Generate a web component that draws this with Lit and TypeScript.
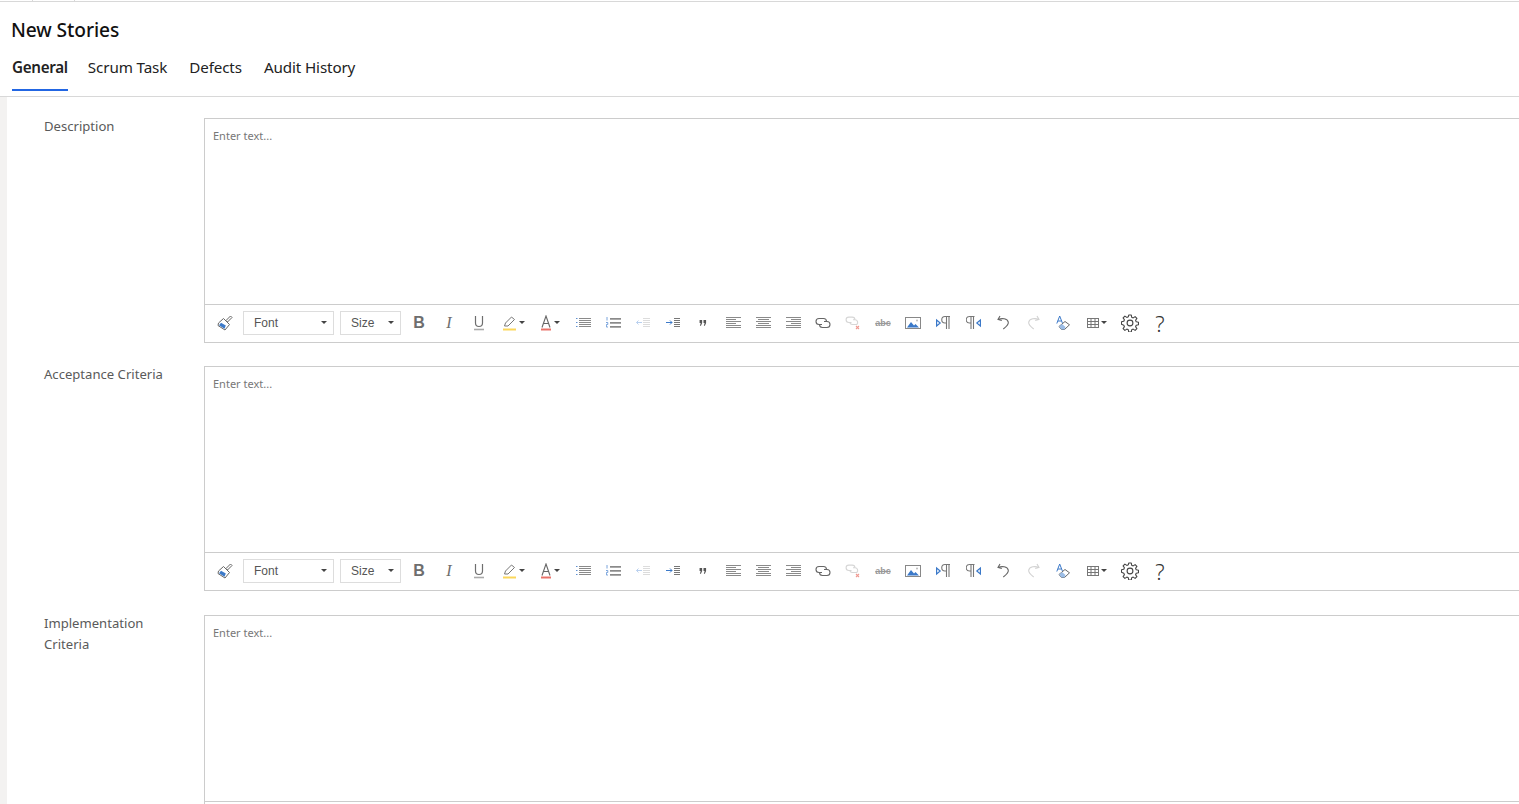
import { LitElement, html, css, svg } from "lit";
import { customElement } from "lit/decorators.js";

const G = "#6e6e6e";
const ico = (w: number, h: number, body: unknown) =>
  html`<svg width=${w} height=${h} viewBox="0 0 ${w} ${h}" fill="none">${body}</svg>`;
const lines = (rows: [number, number, number][], c = "#7a7a7a") =>
  rows.map(([x1, x2, y]) => svg`<path d="M${x1} ${y + 0.5}H${x2}" stroke=${c} stroke-width="1"/>`);
const caret = html`<span class="caret"></span>`;

const icons: Record<string, unknown> = {
  paint: ico(16, 16, svg`
    <path d="M9 5.500 13.500 1l1.500 1.500L10.500 7z" fill="#fff" stroke="#666"/>
    <path d="M6.500 3.500 12.500 9.500 8 15 1 10.500 1.500 8z" fill="#fff" stroke="#666"/>
    <path d="M2 10.300 4 7.800l4.800 2.600L7.500 13.800z" fill="#3b79c9"/>`),
  b: html`<span class="glyph bold">B</span>`,
  i: html`<span class="glyph ital">I</span>`,
  u: ico(14, 16, svg`
    <path d="M3.500 1V8a3.500 3.500 0 0 0 7 0V1" stroke="${G}" stroke-width="1.2"/>
    <path d="M2 14.500h10" stroke="#aaa" stroke-width="1.6"/>`),
  hl: ico(15, 16, svg`
    <path d="M2.500 11 3.500 8l6-6 3 2.500-6.500 6.500z" stroke="#777" fill="#fff"/>
    <path d="M1 14.500h13" stroke="#fbd75b" stroke-width="2"/>`),
  color: ico(12, 16, svg`
    <path d="M2 12.500 6 1l4 11.500M3.600 8.500h4.800" stroke="#666" stroke-width="1.100"/>
    <path d="M1 14.500h10" stroke="#e8736a" stroke-width="2"/>`),
  ul: ico(15, 12, svg`${lines([[3, 15, 1], [3, 15, 3], [3, 15, 5], [3, 15, 7], [3, 15, 9]], "#8a8a8a")}
    <path d="M0 1.500h1.500M0 5.500h1.500M0 9.500h1.500" stroke="#5f8fd0"/>`),
  ol: ico(15, 12, svg`${lines([[4, 15, 1], [4, 15, 5], [4, 15, 9]], "#8a8a8a")}${lines([[4, 15, 2], [4, 15, 6], [4, 15, 10]], "#aaa")}
    <path d="M1 0v3.500M0 5.500h1.800v2H.4v2.500h1.600" stroke="#6b9ad8" stroke-width=".9"/>`),
  out: ico(16, 12, svg`${lines([[8, 15, 1], [8, 15, 3], [8, 15, 5], [8, 15, 7], [8, 15, 9]], "#dcdcdc")}
    <path d="M7 5.500H1.500M3.500 3.500l-2 2 2 2" stroke="#b9d0ef"/>`),
  ind: ico(16, 12, svg`${lines([[9, 15, 1], [9, 15, 3], [9, 15, 5], [9, 15, 7], [9, 15, 9]], "#777")}
    <path d="M1 5.500h6M5 3.500l2 2-2 2" stroke="#3b79c9"/>`),
  quote: html`<svg width="8" height="6" viewBox="0 0 8 7" fill="none"><path d="M0 0h3v3.400L1.600 6.600H.4l.9-3H0zM4.600 0h3v3.400L6.200 6.600H5l.9-3H4.600z" fill="#555"/></svg>`,
  al: ico(16, 12, lines([[1, 16, 0], [1, 11, 2], [1, 16, 4], [1, 11, 6], [1, 16, 8], [1, 16, 10]], "#8a8a8a")),
  ac: ico(16, 12, lines([[1, 16, 0], [3, 14, 2], [1, 16, 4], [3, 14, 6], [1, 16, 8], [1, 16, 10]], "#8a8a8a")),
  ar: ico(16, 12, lines([[1, 16, 0], [6, 16, 2], [1, 16, 4], [6, 16, 6], [1, 16, 8], [1, 16, 10]], "#8a8a8a")),
  link: ico(16, 12, svg`
    <path d="M7 7.500H4a3 3 0 0 1 0-6h4.500a3 3 0 0 1 3 3" stroke="#666" stroke-width="1.100"/>
    <path d="M9 4.500h3a3 3 0 0 1 0 6H7.500a3 3 0 0 1-3-3" stroke="#666" stroke-width="1.100"/>`),
  unlink: ico(16, 14, svg`
    <path d="M6.500 6.500H3.800a2.700 2.700 0 0 1 0-5.400h3.400a2.700 2.700 0 0 1 2.700 2.700" stroke="#d6d6d6" stroke-width="1.100"/>
    <path d="M8 3.800h2a2.700 2.700 0 0 1 1.800 4.700H7.500A2.700 2.700 0 0 1 4.800 6" stroke="#d6d6d6" stroke-width="1.100"/>
    <path d="M11 10l3 3M14 10l-3 3" stroke="#ef9a92" stroke-width="1.100"/>`),
  strike: html`<span class="strike">abc</span>`,
  image: ico(16, 12, svg`
    <rect x=".5" y=".5" width="15" height="11" fill="#fff" stroke="#888"/>
    <path d="M2 10.500 6 5l3 3.400 1.500-1.400 3.500 3.500z" fill="#3b79c9"/>
    <circle cx="12" cy="3.600" r="1" fill="#bbb"/>`),
  ltr: ico(15, 15, svg`
    <path d="M.6 5v6l3.600-3z" fill="#fff" stroke="#3b79c9" stroke-width="1.200"/>
    <path d="M14 1.500H9a3 3 0 0 0 0 6.500h1.500M10.500 14V1.500M13 14V1.500" stroke="#777" stroke-width="1.100"/>`),
  rtl: ico(15, 15, svg`
    <path d="M14.400 5v6l-3.600-3z" fill="#fff" stroke="#3b79c9" stroke-width="1.200"/>
    <path d="M8.500 1.500H3.500a3 3 0 0 0 0 6.500H5M5 14V1.500M7.500 14V1.500" stroke="#777" stroke-width="1.100"/>`),
  undo: ico(13, 15, svg`
    <path d="M3 1 1 4.500l3.800 1M1.500 4.400c3-1.400 9-1.200 9.800 2.800.4 2.600-2 4.600-5 6.800" stroke="#666" stroke-width="1.100"/>`),
  redo: ico(13, 15, svg`
    <path d="M10 1l2 3.500-3.800 1M11.500 4.400C8.500 3 2.500 3.200 1.700 7.200c-.4 2.600 2 4.600 5 6.800" stroke="#d2d2d2" stroke-width="1.100"/>`),
  style: ico(15, 15, svg`
    <path d="M.8 8.500 3.700 1l2.900 7.500M1.800 6h3.800" stroke="#3b79c9" stroke-width="1"/>
    <path d="M3 11.500 9 6.500l4.500 3.300-5 4.700H5.500z" fill="#fff" stroke="#666"/>
    <path d="M3 11.500 6 9l3.500 3-1 2.500h-3z" fill="#9cbde6"/>`),
  table: ico(12, 10, svg`
    <rect x=".5" y=".5" width="11" height="9" fill="#fff" stroke="#777"/>
    <path d="M.5 3.500h11M.5 6.500h11M4 .5v9M8 .5v9" stroke="#777"/>`),
  gear: ico(18, 18, svg`
    <circle cx="9" cy="9" r="2.900" stroke="#444" stroke-width="1.100"/>
    <path d="M7.700 1h2.600l.4 2.300 1.500.6 1.900-1.300 1.800 1.800-1.300 1.900.6 1.500 2.300.4v2.600l-2.300.4-.6 1.500 1.300 1.900-1.800 1.800-1.900-1.300-1.500.6-.4 2.300H7.700l-.4-2.300-1.500-.6-1.900 1.300-1.800-1.800 1.300-1.900-.6-1.500L.5 10.300V7.700l2.300-.4.6-1.500L2.100 3.900l1.800-1.800 1.900 1.300 1.500-.6z" stroke="#444" stroke-width="1.100" stroke-linejoin="round"/>`),
  help: html`<span class="help">?</span>`,
};

const order = ["b", "i", "u", "hl", "color", "ul", "ol", "out", "ind", "quote", "al", "ac", "ar", "link", "unlink", "strike", "image", "ltr", "rtl", "undo", "redo", "style", "table", "gear", "help"];
const widths: Record<string, string> = { hl: "hl", color: "color", table: "tbl" };

@customElement("app-root")
export class AppRoot extends LitElement {
  static styles = css`
    :host { display: block; height: 804px; overflow: hidden; background: #fff; font-family: "Noto Sans", "Open Sans", sans-serif; }
    .top { height: 1px; border-bottom: 1px solid #d8d8d8; display: flex; padding-left: 32px; gap: 41px; }
    .tick { width: 1px; height: 1px; background: #d8d8d8; }
    .head { border-bottom: 1px solid #d8d8d8; height: 95px; padding-left: 12px; box-sizing: border-box; }
    h1 { margin: 0 0 0 -1px; padding-top: 14px; font-size: 19.2px; line-height: 27px; font-weight: 500; color: #111; letter-spacing: -.1px; }
    .tabs { display: flex; margin-top: 14px; gap: 22px; font-size: 15.2px; color: #222; line-height: 20px; }
    .tab { height: 32px; letter-spacing: -.12px; }
    .tab.on { font-weight: 600; border-bottom: 2px solid #2266e3; margin-right: -2px; letter-spacing: -.3px; height: 32px; }
    .body { display: flex; }
    .strip { width: 7px; background: #f3f2f1; flex: none; }
    .main { padding: 21px 0 0 37px; }
    .row { display: flex; margin-bottom: 23px; }
    .row:nth-child(2) { margin-bottom: 24px; }
    .label { width: 160px; margin-top: -2px; font-size: 13.1px; line-height: 21px; color: #5a5a5a; }
    .ed { width: 1400px; flex: none; border: 1px solid #ccc; box-sizing: border-box; height: 225px; display: flex; flex-direction: column; }
    .text { height: 185px; box-sizing: border-box; padding: 9px 8px; font-size: 11px; line-height: 15px; color: #777; }
    .tb { height: 38px; border-top: 1px solid #ccc; box-sizing: border-box; display: flex; align-items: center; padding: 0 0 2px 5px; font-family: "Liberation Sans", sans-serif; }
    .btn { width: 30px; height: 24px; display: flex; align-items: center; justify-content: center; flex: none; gap: 2px; }
    .btn.hl { width: 38px; }
    .btn.color { width: 36px; }
    .btn.tbl { width: 37px; }
    .sel { height: 24px; box-sizing: border-box; border: 1px solid #ddd; font-size: 12px; color: #555; display: flex; align-items: center; justify-content: space-between; padding: 0 6px 0 10px; flex: none; }
    .font { width: 91px; margin: 0 6px 0 3px; }
    .size { width: 61px; margin-right: 3px; }
    .caret { width: 0; height: 0; border: 3px solid transparent; border-top-color: #444; border-bottom: 0; flex: none; }
    .glyph { color: #6e6e6e; font-size: 16px; line-height: 16px; }
    .bold { font-weight: 700; font-family: "Liberation Sans", sans-serif; }
    .ital { font-family: "Liberation Serif", serif; font-style: italic; }
    .strike { font-size: 9px; font-weight: 700; color: #999; text-decoration: line-through; line-height: 12px; }
    .help { font-size: 22px; line-height: 22px; color: #333; font-family: "Noto Sans", sans-serif; font-weight: 300; }
  `;

  private toolbar() {
    return html`<div class="tb">
      <div class="btn">${icons.paint}</div>
      <div class="sel font"><span>Font</span>${caret}</div>
      <div class="sel size"><span>Size</span>${caret}</div>
      ${order.map((k) => html`<div class="btn ${widths[k] ?? ""}">${icons[k]}${widths[k] ? caret : ""}</div>`)}
    </div>`;
  }

  private editor(label: unknown, withTools = true) {
    return html`<div class="row">
      <div class="label">${label}</div>
      <div class="ed"><div class="text">Enter text...</div>${withTools ? this.toolbar() : html`<div class="tb"></div>`}</div>
    </div>`;
  }

  render() {
    return html`
      <div class="top"><span class="tick"></span><span class="tick"></span></div>
      <div class="head">
        <h1>New Stories</h1>
        <div class="tabs">
          <div class="tab on">General</div>
          <div class="tab">Scrum Task</div>
          <div class="tab">Defects</div>
          <div class="tab">Audit History</div>
        </div>
      </div>
      <div class="body">
        <div class="strip"></div>
        <div class="main">
          ${this.editor("Description")}
          ${this.editor("Acceptance Criteria")}
          ${this.editor(html`Implementation<br />Criteria`, false)}
        </div>
      </div>
    `;
  }
}
